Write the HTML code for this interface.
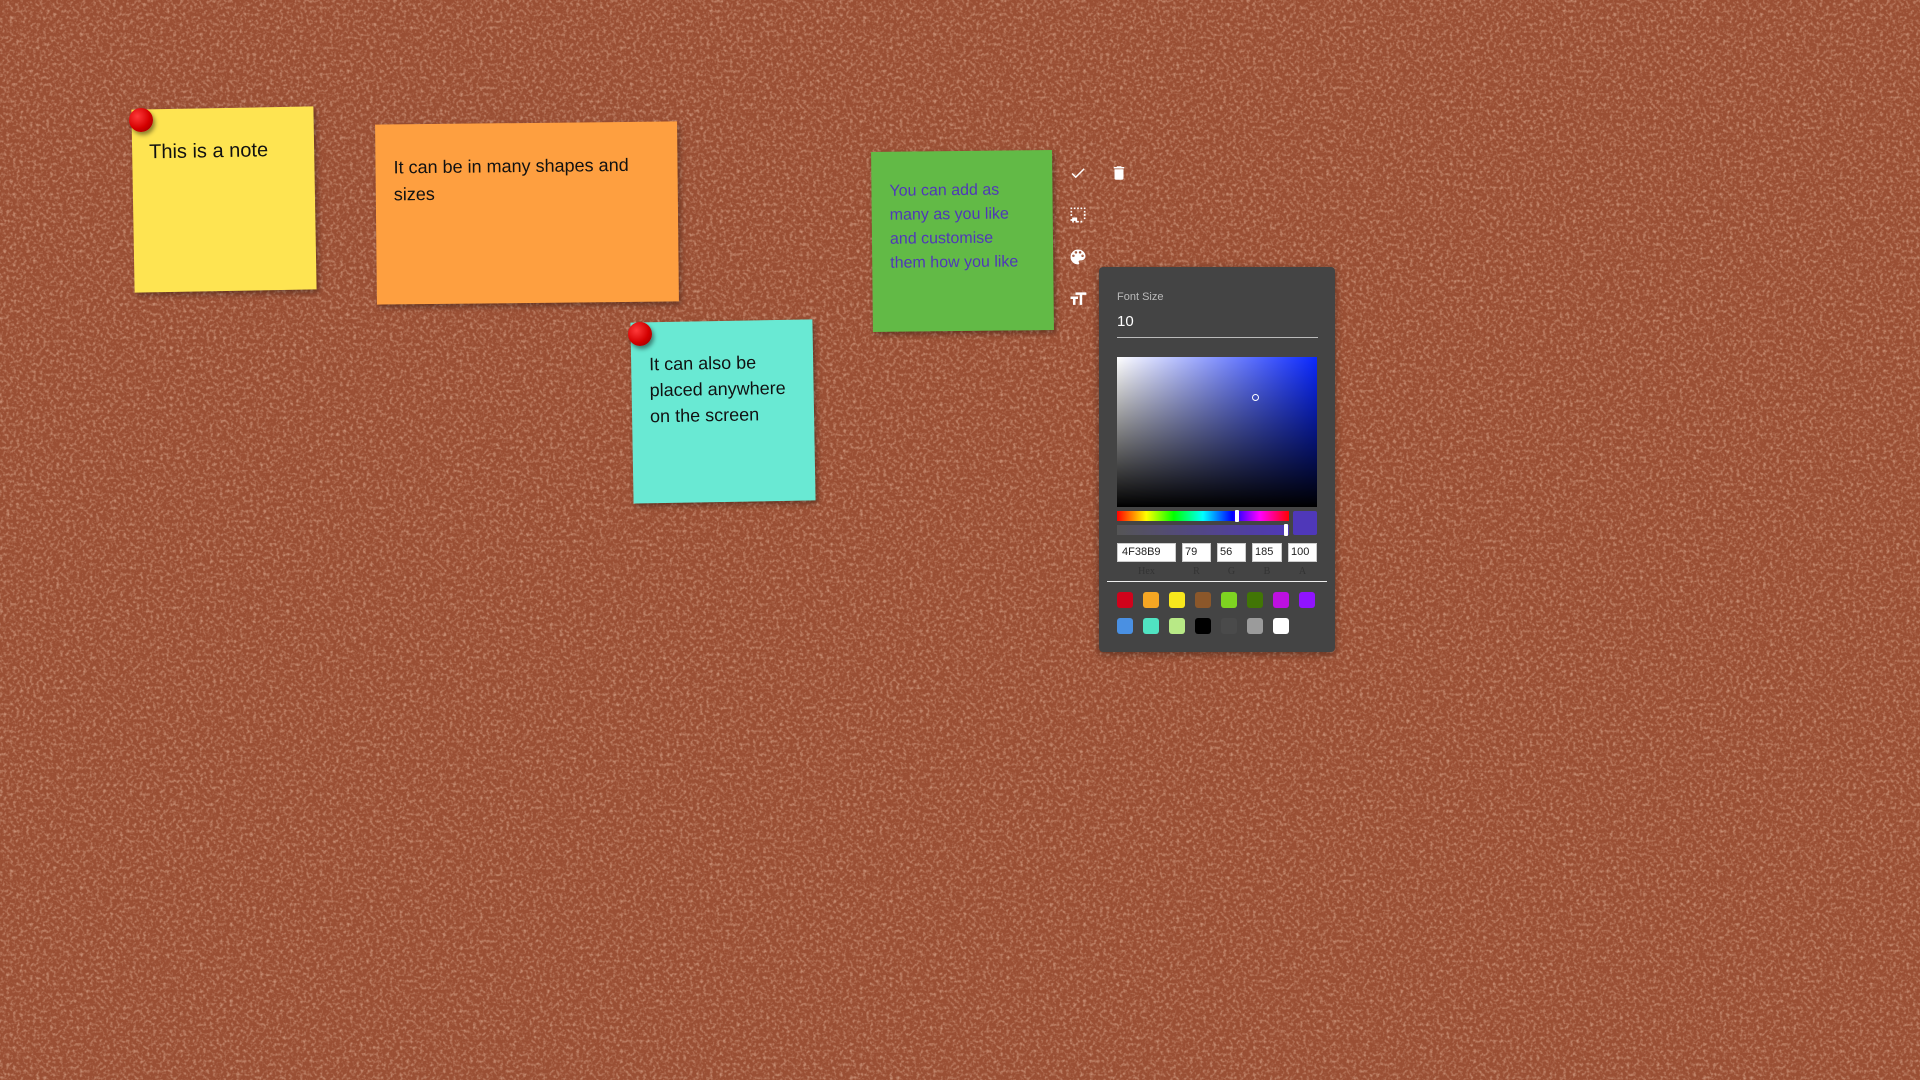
<!DOCTYPE html>
<html><head><meta charset="utf-8"><style>
html,body{margin:0;padding:0;width:1920px;height:1080px;overflow:hidden;background:#a65b3e;font-family:"Liberation Sans",sans-serif}
#bg{position:absolute;left:0;top:0}
.note{position:absolute;box-shadow:2px 3px 6px rgba(0,0,0,.35);color:#111;box-sizing:border-box}
.pin{position:absolute;width:24px;height:24px;border-radius:50%;background:radial-gradient(circle at 35% 35%,#ff3a3a,#d40000 55%,#8a0000);box-shadow:2px 3px 4px rgba(0,0,0,.45)}
.ic{position:absolute}
#panel{position:absolute;left:1099px;top:267px;width:236px;height:385px;background:#444;border-radius:4px;box-shadow:0 2px 8px rgba(0,0,0,.4)}
.abs{position:absolute}
.inp{position:absolute;top:276px;height:19px;background:#fff;border:1px solid #ccc;box-sizing:border-box;font-size:11px;padding-left:4px;line-height:17px;color:#222}
.lbl{position:absolute;top:299px;font-family:"Liberation Serif",serif;font-size:10px;color:#333;text-align:center}
.sw{position:absolute;width:16px;height:16px;border-radius:3px}
</style></head><body>
<svg id="bg" width="1920" height="1080"><filter id="n"><feTurbulence type="fractalNoise" baseFrequency="0.3" numOctaves="2" seed="3"/><feColorMatrix values="0 0 0 0 0.80  0 0 0 0 0.50  0 0 0 0 0.36  0 0 0 -2.4 1.3"/></filter><rect width="1920" height="1080" fill="#9a4f34"/><rect width="1920" height="1080" filter="url(#n)" opacity=".6"/></svg>

<div class="note" style="left:133px;top:108px;width:182px;height:183px;background:#fee451;transform:rotate(-1deg)"><div style="position:absolute;left:17px;top:32px;font-size:20px">This is a note</div></div>
<div class="pin" style="left:129px;top:108px"></div>

<div class="note" style="left:376px;top:123px;width:302px;height:180px;background:#fe9f40;transform:rotate(-0.6deg)"><div style="position:absolute;left:18px;top:30px;font-size:18px;line-height:27px;width:240px">It can be in many shapes and sizes</div></div>

<div class="note" style="left:632px;top:321px;width:182px;height:181px;background:#69e9d3;transform:rotate(-1deg)"><div style="position:absolute;left:18px;top:29px;font-size:18px;line-height:26px;width:150px">It can also be placed anywhere on the screen</div></div>
<div class="pin" style="left:628px;top:322px"></div>

<div class="note" style="left:872px;top:151px;width:181px;height:180px;background:#62ba46;transform:rotate(-0.6deg)"><div style="position:absolute;left:18px;top:28px;font-size:16px;line-height:24px;color:#4f38b9;width:140px">You can add as many as you like and customise them how you like</div></div>

<svg class="ic" style="left:1069px;top:164px" width="18" height="18" viewBox="0 0 24 24"><path d="M9 16.2L4.8 12l-1.4 1.4L9 19 21 7l-1.4-1.4z" fill="#fff"/></svg>
<svg class="ic" style="left:1110px;top:164px" width="18" height="18" viewBox="0 0 24 24"><path d="M6 19c0 1.1.9 2 2 2h8c1.1 0 2-.9 2-2V7H6v12zM19 4h-3.5l-1-1h-5l-1 1H5v2h14V4z" fill="#fff"/></svg>
<svg class="ic" style="left:1068px;top:205px" width="20" height="20" viewBox="0 0 24 24"><path d="M3 5h2V3H3v2zm4-2v2h2V3H7zm4 0v2h2V3h-2zm4 0v2h2V3h-2zm4 0v2h2V3h-2zm0 4v2h2V7h-2zm0 4v2h2v-2h-2zm0 4v2h2v-2h-2zm-4 4v2h2v-2h-2zm-4 0v2h2v-2h-2zm-8 0v2h2v-2H3zm0-4v2h2v-2H3zm0-4v2h2v-2H3zm0-4v2h2V7H3zm4 12v2h2v-2H7zm-4-4h8v6H3z" fill="#fff"/></svg>
<svg class="ic" style="left:1068px;top:247px" width="20" height="20" viewBox="0 0 24 24"><path d="M12 3a9 9 0 0 0 0 18c.83 0 1.5-.67 1.5-1.5 0-.39-.15-.74-.39-1.01-.23-.26-.38-.61-.38-.99 0-.83.67-1.5 1.5-1.5H16c2.760 0 5-2.24 5-5 0-4.42-4.030-8-9-8zm-5.5 9a1.5 1.5 0 1 1 0-3 1.5 1.5 0 0 1 0 3zm3-4a1.5 1.5 0 1 1 0-3 1.5 1.5 0 0 1 0 3zm5 0a1.5 1.5 0 1 1 0-3 1.5 1.5 0 0 1 0 3zm3 4a1.5 1.5 0 1 1 0-3 1.5 1.5 0 0 1 0 3z" fill="#fff"/></svg>
<svg class="ic" style="left:1068px;top:289px" width="20" height="20" viewBox="0 0 24 24"><path d="M9 4v3h5v12h3V7h5V4H9zm-6 8h3v7h3v-7h3V9H3v3z" fill="#fff"/></svg>

<div id="panel">
<div class="abs" style="left:18px;top:24px;font-size:11px;color:#bbb">Font Size</div>
<div class="abs" style="left:18px;top:46px;font-size:15px;color:#fff">10</div>
<div class="abs" style="left:18px;top:70px;width:201px;height:1px;background:#bbb"></div>
<div class="abs" style="left:18px;top:90px;width:200px;height:150px;background:linear-gradient(to top,#000,transparent),linear-gradient(to right,#fff,#0a28ff)"></div>
<div class="abs" style="left:153px;top:127px;width:5px;height:5px;border:1.5px solid #fff;border-radius:50%"></div>
<div class="abs" style="left:18px;top:244px;width:172px;height:10px;background:linear-gradient(to right,#f00,#ff0 17%,#0f0 33%,#0ff 50%,#00f 67%,#f0f 83%,#f00)"></div>
<div class="abs" style="left:136px;top:243px;width:4px;height:12px;background:#fff;border-radius:1px"></div>
<div class="abs" style="left:18px;top:258px;width:172px;height:10px;background:linear-gradient(to right,rgba(79,56,185,0),#4f38b9),#555"></div>
<div class="abs" style="left:185px;top:257px;width:4px;height:12px;background:#fff;border-radius:1px"></div>
<div class="abs" style="left:194px;top:244px;width:24px;height:24px;background:#4f38b9;border-radius:2px"></div>
<div class="inp" style="left:18px;width:59px">4F38B9</div>
<div class="inp" style="left:83px;width:29px;padding-left:2px">79</div>
<div class="inp" style="left:118px;width:29px;padding-left:2px">56</div>
<div class="inp" style="left:153px;width:30px;padding-left:2px">185</div>
<div class="inp" style="left:189px;width:29px;padding-left:2px">100</div>
<div class="lbl" style="left:18px;width:59px">Hex</div>
<div class="lbl" style="left:83px;width:29px">R</div>
<div class="lbl" style="left:118px;width:29px">G</div>
<div class="lbl" style="left:153px;width:30px">B</div>
<div class="lbl" style="left:189px;width:29px">A</div>
<div class="abs" style="left:8px;top:314px;width:220px;height:1px;background:#eee"></div>
<div class="sw" style="left:18px;top:325px;background:#d0021b"></div>
<div class="sw" style="left:44px;top:325px;background:#f5a623"></div>
<div class="sw" style="left:70px;top:325px;background:#f8e71c"></div>
<div class="sw" style="left:96px;top:325px;background:#8b572a"></div>
<div class="sw" style="left:122px;top:325px;background:#7ed321"></div>
<div class="sw" style="left:148px;top:325px;background:#417505"></div>
<div class="sw" style="left:174px;top:325px;background:#bd10e0"></div>
<div class="sw" style="left:200px;top:325px;background:#9013fe"></div>
<div class="sw" style="left:18px;top:351px;background:#4a90e2"></div>
<div class="sw" style="left:44px;top:351px;background:#50e3c2"></div>
<div class="sw" style="left:70px;top:351px;background:#b8e986"></div>
<div class="sw" style="left:96px;top:351px;background:#000"></div>
<div class="sw" style="left:122px;top:351px;background:#4a4a4a"></div>
<div class="sw" style="left:148px;top:351px;background:#9b9b9b"></div>
<div class="sw" style="left:174px;top:351px;background:#fff"></div>
</div>
</body></html>
